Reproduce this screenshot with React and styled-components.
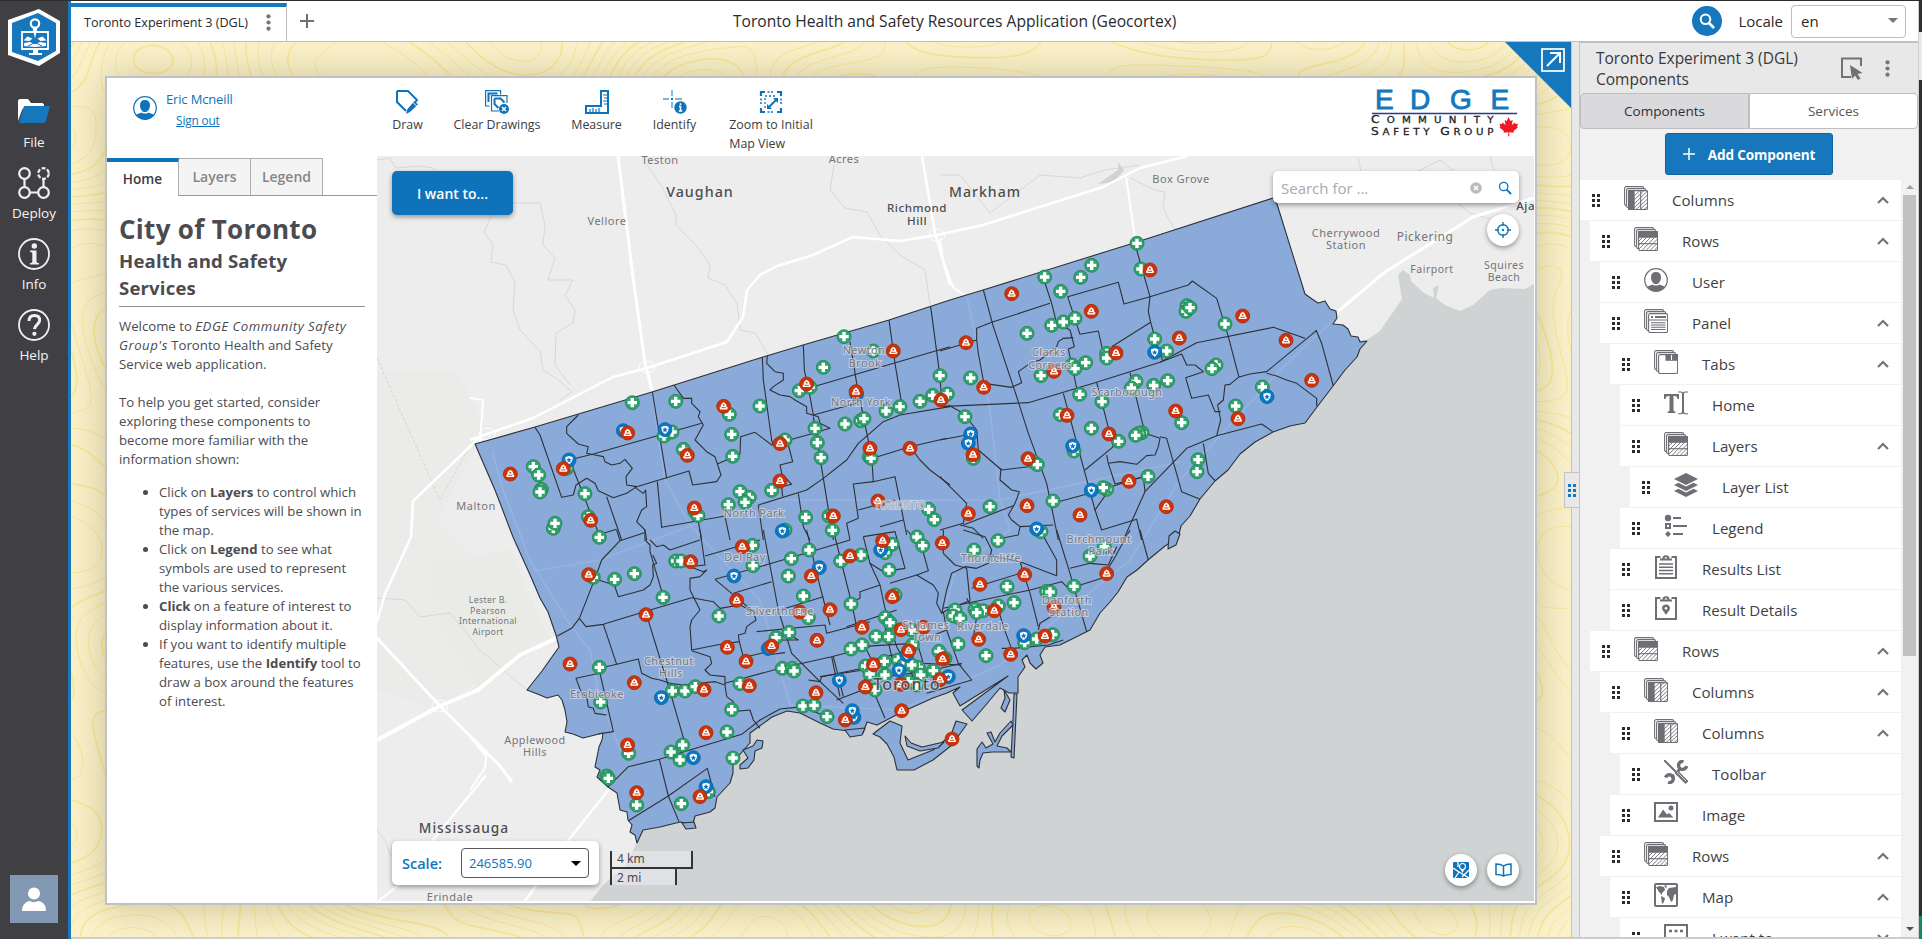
import React from "react";
import styled, { createGlobalStyle, css } from "styled-components";

const BLUE = "#1777bc";
const MAPBLUE = "#0f73bb";
const ICON = "#6e6e74";

const Global = createGlobalStyle`
  * { box-sizing: border-box; }
  body { margin: 0; overflow: hidden; font-family: "Open Sans", "Noto Sans", sans-serif; color: #333; }
  svg { display: block; flex: none; }
`;

/* ---------- application frame ---------- */
const Shell = styled.div`
  width: 1922px; height: 939px; display: flex;
  border-top: 1px solid #2b2a2d; background: #fff;
`;
const Column = styled.div`display: flex; flex-direction: column; width: 1847px;`;
const Edge = styled.div`
  width: 4px; border-left: 1px solid #cfcfd2; background: linear-gradient(#2f2f31 0 31px, #e9e9e9 31px 79px, #2f2f31 79px 915px, #148a63 915px);
`;

const Nav = styled.nav`
  width: 71px; background: #403f44; border-right: 3px solid ${BLUE};
  display: flex; flex-direction: column; align-items: center; padding: 8px 0 16px;
`;
const NavItem = styled.div`
  height: 71px; display: flex; flex-direction: column; align-items: center;
  color: #f4f4f4; font-size: 13.5px; line-height: 20px;
  svg { margin-bottom: 4px; }
`;
const NavItems = styled.div`margin-top: 29px; flex: 1;`;
const Profile = styled.div`
  width: 48px; height: 48px; background: #8199b2; display: grid; place-items: center;
`;

const TopBar = styled.header`
  height: 41px; display: flex; align-items: stretch; border-bottom: 1px solid #bdbdc2; background: #fff;
`;
const DocTab = styled.div`
  width: 216px; margin-top: 2px; border-top: 4px solid ${BLUE}; border-right: 1px solid #bdbdc2;
  display: flex; align-items: center; justify-content: space-between; padding: 0 15px 3px 13px;
  font-size: 12.6px; color: #29292c; white-space: nowrap;
`;
const AddTab = styled.div`width: 40px; display: grid; place-items: center; padding-bottom: 1px;`;
const AppTitle = styled.div`
  flex: 1; text-align: center; font-size: 15.6px; line-height: 40px; color: #29292c; margin-right: 110px; white-space: nowrap;
`;
const TopRight = styled.div`
  display: flex; align-items: center; font-size: 15px; color: #29292c; padding-right: 12px;
`;
const SearchDot = styled.div`
  width: 30px; height: 30px; border-radius: 50%; background: ${BLUE}; display: grid; place-items: center; margin-right: 16px;
`;
const LocaleBox = styled.div`
  width: 115px; height: 33px; margin-left: 8px; border: 1px solid #bdbdc2; border-radius: 4px;
  display: flex; align-items: center; justify-content: space-between; padding: 0 7px 1px 9px;
`;
const Main = styled.div`display: flex; height: 895px;`;
const BottomLine = styled.div`height: 2px; background: #cdcdd0;`;

/* ---------- stage ---------- */
const Stage = styled.div`
  position: relative; width: 1500px; background: #fbf2cb; overflow: hidden; padding: 34px 34px 32px;
`;
const Backdrop = styled.div`position: absolute; inset: 0;`;
const Corner = styled.div`
  position: absolute; right: 0; top: 0; width: 66px; height: 66px; background: ${BLUE};
  clip-path: polygon(0 0, 100% 0, 100% 100%); padding: 6px 6px 0 36px;
`;
const Preview = styled.div`
  position: relative; width: 1432px; height: 829px; border: 2px solid #bfc0c8; background: #fff;
  box-shadow: 0 2px 38px rgba(90, 80, 20, .3); display: flex; flex-direction: column;
`;
const PreviewHead = styled.div`display: flex; height: 78px; color: #3c3c40;`;
const UserBlock = styled.div`
  width: 254px; padding: 11px 0 0 26px; display: flex; gap: 9px; color: ${MAPBLUE}; font-size: 13px; line-height: 21px;
  > svg { margin-top: 7px; }
`;
const UserText = styled.div`display: flex; flex-direction: column; align-items: center; letter-spacing: -.15px;`;
const SignOut = styled.span`font-size: 11.800px; margin-left: -3px; text-decoration: underline; line-height: 20px;`;
const Tools = styled.div`display: flex; flex: 1; padding: 12px 0 0 16px; `;
const Tool = styled.div`
  margin: 0 16px; display: flex; flex-direction: column; align-items: center;
  width: ${p => p.$w}px; font-size: 12.4px; line-height: 19px; white-space: nowrap;
  svg { margin-bottom: 1px; }
`;
const Brand = styled.div`padding: 4px 15px 0 0;`;
const PreviewBody = styled.div`display: flex; flex: 1;`;
const Side = styled.aside`width: 270px; color: #4b4b50;`;
const TabRow = styled.div`
  display: flex; margin-top: 2px; height: 38px; border-bottom: 1px solid #98989d;
`;
const SideTab = styled.div`
  width: 72px; text-align: center; font-weight: 600; font-size: 14px; line-height: 36px;
  border-top: 1px solid #adadb2; border-right: 1px solid #adadb2; background: #f4f4f4; color: #86868a;
  ${p => p.$active && css`
    height: 38px; border-top: 4px solid ${MAPBLUE}; background: #fff; color: #3b3b40; line-height: 33px; font-size: 13.6px;
  `}
`;
const Article = styled.div`
  padding: 15px 12px 0 12px; font-size: 13.2px; line-height: 19px; white-space: nowrap;
  h1 { font-size: 26px; line-height: 36px; margin: 0; font-weight: 700; letter-spacing: .3px; }
  h2 { font-size: 18.6px; line-height: 27px; margin: 0; font-weight: 700; letter-spacing: .15px; }
  hr { border: 0; border-top: 1px solid #8f8f94; margin: 5px 0 10px; }
  p { margin: 0 0 19px; }
  i { letter-spacing: .5px; }
  ul { margin: -5px 0 0; padding-left: 40px; }
`;
const MapArea = styled.div`position: relative; width: 1157px; height: 745px; overflow: hidden; background: #ededed;`;
const Floating = styled.div`
  position: absolute; left: ${p => p.$x}px; top: ${p => p.$y}px; background: #fff; border-radius: 5px;
  box-shadow: 0 2px 5px rgba(0,0,0,.38); display: flex; align-items: center;
`;
const WantTo = styled(Floating)`
  width: 121px; height: 44px; background: ${MAPBLUE}; color: #fff; justify-content: center; font-weight: 600; font-size: 14px;
`;
const SearchBox = styled(Floating)`
  width: 246px; height: 32px; padding: 1px 7px 0 8px; font-size: 15px; color: #a9a9ad; gap: 16px;
  span { flex: 1; }
`;
const RoundButton = styled(Floating)`width: 32px; height: 32px; border-radius: 50%; justify-content: center;`;
const ScaleBox = styled(Floating)`
  width: 207px; height: 44px; padding: 0 10px; justify-content: space-between; color: ${MAPBLUE}; font-size: 14.5px;
  b { font-weight: 600; }
`;
const ScaleInput = styled.div`
  width: 128px; height: 30px; border: 1px solid #57575c; border-radius: 4px; display: flex; align-items: center;
  justify-content: space-between; padding: 0 7px; font-size: 13px;
`;
const ScaleBar = styled.div`position: absolute; left: 233px; top: 695px; font-size: 12px; color: #48484c; font-family: "Noto Sans", sans-serif;`;
const ScaleSeg = styled.div`
  width: ${p => p.$w}px; height: ${p => (p.$last ? 16 : 18)}px; line-height: 16px; padding-left: 5px; background: rgba(235,235,238,.6);
  border: 2px solid #333; border-top: 0; ${p => p.$last && "border-bottom: 0; line-height: 18px;"}
`;

/* ---------- splitter and component panel ---------- */
const Splitter = styled.div`
  position: relative; width: 9px; background: #e8e8e9; border-left: 1px solid #c2c2c7; border-right: 1px solid #c2c2c7;
`;
const Grip = styled.div`
  position: absolute; left: -8px; top: 430px; width: 15px; height: 36px; background: #e8e8e9;
  border: 1px solid #c2c2c7; border-right: 0; display: grid; place-items: center;
`;
const Panel = styled.aside`width: 338px; display: flex; flex-direction: column; background: #f1f1f1; border-top: 1px solid #c2c2c7;`;
const PanelHead = styled.div`
  height: 50px; background: #e8e8e8; display: flex; align-items: center; padding: 1px 28px 0 16px;
  font-size: 15.5px; line-height: 21px; color: #38383c; white-space: nowrap;
  div { flex: 1; } svg + svg { margin-left: 22px; }
`;
const Switch = styled.div`display: flex; height: 36px;`;
const SwitchTab = styled.div`
  flex: 1; text-align: center; line-height: 34px; font-size: 13.5px; color: #55555a; background: #fff;
  border: 1px solid #bdbdc2; border-radius: 0 4px 4px 0;
  ${p => p.$active && css`flex: 0 0 169px; background: #dadadd; color: #2f2f33; border-radius: 4px 0 0 4px;`}
`;
const AddWrap = styled.div`height: 51px; padding: 4px 0 0 85px;`;
const AddButton = styled.div`
  width: 168px; height: 42px; border-radius: 3px; background: ${BLUE}; border: 1px solid #11659f; color: #fff;
  font-weight: 700; font-size: 13.6px; letter-spacing: -.15px; display: flex; align-items: center; justify-content: center; gap: 13px;
`;
const TreeArea = styled.div`display: flex; height: 757px; overflow: hidden;`;
const Tree = styled.div`width: 321px;`;
const TreeRow = styled.div`
  height: 40px; margin: 0 0 1px ${p => p.$depth * 10}px; background: #fff; display: flex; align-items: center;
  padding: 0 11px 0 12px; color: #3f3f43; font-size: 15.100px;
  span { flex: 1; margin-left: 24px; }
  > svg:nth-child(2) { margin: 0 0 4px 24px; }
`;
const Scroll = styled.div`
  width: 17px; display: flex; flex-direction: column; align-items: center; justify-content: space-between; padding: 5px 0 6px; background: #f1f1f1;
`;
const Thumb = styled.div`width: 13px; height: 461px; background: #c1c1c1; margin: 6px 0 auto;`;

/* ---------- small drawings ---------- */
const Dots = ({ c = "#75757a" }) => (
  <svg width="5" height="17" fill={c}><circle cx="2.5" cy="2.3" r="2.1" /><circle cx="2.5" cy="8.5" r="2.1" /><circle cx="2.5" cy="14.7" r="2.1" /></svg>
);
const Handle = ({ c = "#2b2b2f" }) => (
  <svg width="8" height="13" fill={c}>
    {[0, 5, 10].map(y => [0, 5].map(x => <rect key={x + "," + y} x={x} y={y} width="3" height="3" />))}
  </svg>
);
const Chevron = ({ down }) => (
  <svg width="14" height="10" fill="none" stroke="#74747a" strokeWidth="2.2"><path d={down ? "M2 2l5 5 5-5" : "M2 8l5-5 5 5"} /></svg>
);
const Magnifier = ({ s, c, w = 2 }) => (
  <svg width={s} height={s} viewBox="0 0 16 16" fill="none" stroke={c} strokeWidth={w}><circle cx="6.5" cy="6.3" r="4.8" /><path d="M10 10l5 5" strokeWidth={w + 0.6} /></svg>
);
const Caret = ({ c, w = 10 }) => <svg width={w} height={w / 2} viewBox="0 0 10 5" fill={c}><path d="M0 0h10L5 5z" /></svg>;
const Person = ({ c, s = 24 }) => (
  <svg width={s} height={s} viewBox="0 0 24 24"><circle cx="12" cy="12" r="11.3" fill="#fff" stroke={c} strokeWidth="1.2" />
    <path d="M12 4c3.4 0 5 2 5 5.2 0 3.2-1.800 6.800-5 6.800s-5-3.600-5-6.800C7 6 8.600 4 12 4zM3.200 18.500c2-.9 4-1.300 5.200-2 1 1.400 6.200 1.400 7.200 0 1.200.7 3.200 1.100 5.200 2C18.500 22 15.500 23.300 12 23.300S5.500 22 3.200 18.500z" fill={c} /></svg>
);

const Logo = () => (
  <svg width="54" height="58" viewBox="0 0 54 58">
    <path d="M32 0L53 12v32L32 57 1 46V11z" fill="#fff" /><path d="M31 4l18 10v28L31 52 5 43V14z" fill={BLUE} />
    <path d="M15 23h26v17H15z" fill="none" stroke="#fff" strokeWidth="1.800" />
    <path d="M16.500 31.500l4-4 5 2-3 2.500zM39.500 31.500l-4-4-5 2 3 2.500zM17 34l6-1 5 2.300 5-2.300 6 1v3l-11 1-11-1z" fill="#fff" />
    <path d="M21 37l7-3.500 7 3.500" fill="none" stroke={BLUE} strokeWidth="1" />
    <circle cx="28" cy="14.500" r="4.200" fill={BLUE} stroke="#fff" strokeWidth="2.200" /><path d="M25.500 18.500l2.500 11 2.500-11z" fill="#fff" />
    <path d="M26 41h5v3h4v2H22v-2h4z" fill="#fff" />
  </svg>
);
const navIcons = {
  File: <svg width="32" height="32" viewBox="0 0 32 32"><path d="M0 5c0-1 1-2 2-2h8l3 4h11c1 0 2 1 2 2v3H7c-2 0-2.500 1-3 2L0 25z" fill="#fff" /><path d="M6 10h26l-4 15c-.4 1.300-1 2-2.500 2H1z" fill={BLUE} /></svg>,
  Deploy: <svg width="32" height="32" viewBox="0 0 32 32" fill="none" stroke="#f0f0f0" strokeWidth="2.200"><circle cx="6.500" cy="6.500" r="5.300" /><circle cx="6.500" cy="25.500" r="5.300" /><circle cx="25.500" cy="25.500" r="5.300" /><circle cx="25.500" cy="6.500" r="5.300" strokeDasharray="4 1.600" /><path d="M6.500 12v8M12 25.500h8M25.500 12v8" /></svg>,
  Info: <svg width="32" height="32" viewBox="0 0 32 32"><circle cx="16" cy="16" r="15" fill="none" stroke="#f0f0f0" strokeWidth="1.800" /><circle cx="16.300" cy="8" r="2.700" fill="#f0f0f0" /><path d="M12 12.500h6.500v11c0 1 1 1.500 2.500 1.500v1.500h-9V25c1.500 0 2.300-.5 2.300-1.500v-8c0-1-.8-1.500-2.300-1.500z" fill="#f0f0f0" /></svg>,
  Help: <svg width="32" height="32" viewBox="0 0 32 32"><circle cx="16" cy="16" r="15" fill="none" stroke="#f0f0f0" strokeWidth="1.800" /><path d="M11 12c0-3.500 2-5.500 5.500-5.500 3.200 0 5.200 1.800 5.200 4.600 0 4-4.700 4.400-5.200 9" fill="none" stroke="#f0f0f0" strokeWidth="3" /><circle cx="16.400" cy="24.800" r="2.100" fill="#f0f0f0" /></svg>,
};

const toolIcons = {
  draw: <><path d="M1 1h11l9 9-2 2.500M1 1v11l9 9" fill="none" stroke={MAPBLUE} strokeWidth="2" /><path d="M18.500 11l3.500 3.500-8 7.500-4 2 1.500-5z" fill={MAPBLUE} /><path d="M17 12.500l4 4" stroke="#fff" /></>,
  clear: <g fill="none" stroke={MAPBLUE}><path d="M4.500 16H.6V.6h15v4" strokeWidth="1.200" /><path d="M3.500 12V3.500h9" strokeWidth="2" /><path d="M14 21H6.500V5.600H22V13" strokeWidth="1.200" /><path d="M9.500 8.500h6l4 4M9.500 8.500V14l4 4" strokeWidth="2" /><circle cx="19" cy="19" r="5" fill={MAPBLUE} stroke="none" /><path d="M17 17l4 4M21 17l-4 4" stroke="#fff" strokeWidth="1.500" /></g>,
  measure: <g fill="none" stroke={MAPBLUE} strokeWidth="2"><path d="M23 1v22H1v-7h15V1z" /><path d="M22 5h-4M22 8h-3M22 11h-4M22 14h-3M5 22v-3M8 22v-4M11 22v-3M14 22v-4" strokeWidth="1.200" /></g>,
  identify: <><path d="M9 0v6M0 9h6M12 9h7M9 12v6" stroke="#7fb3dc" strokeWidth="1.800" /><rect x="8" y="8" width="2" height="2" fill={MAPBLUE} /><circle cx="17.500" cy="17.500" r="6.200" fill={MAPBLUE} /><path d="M17.500 13.200v1.800M17.500 16v5M16 16.500h2M15.800 21h3.500" stroke="#fff" strokeWidth="1.600" /></>,
  zoom: <g fill="none" stroke={MAPBLUE} strokeWidth="1.800"><path d="M2 6V2h4M18 2h4v4M22 18v4h-4M6 22H2v-4" strokeWidth="2.200" /><path d="M8.500 2h7M8.500 22h7M2 8.500v7M22 8.500v7" strokeDasharray="2 1.500" strokeWidth="1.500" /><path d="M6 18V6h12" strokeDasharray="2 2" strokeWidth="1.300" /><path d="M9.500 17.500l8-8" strokeWidth="2" /><path d="M14 8h5v5zM8 14v5h5z" fill={MAPBLUE} stroke="none" /></g>,
};

const Stack = ({ children }) => (
  <g fill="#fff" stroke={ICON} strokeWidth="1.100"><rect x=".6" y=".6" width="19" height="19" rx="1.500" /><rect x="2.600" y="2.600" width="19" height="19" rx="1.500" /><rect x="4.600" y="4.600" width="19" height="19" rx="1.500" />{children}</g>
);
const clip = <g fill="none" stroke={ICON} strokeWidth="2"><path d="M6.500 2H2v21h20V2h-4.500" /><path d="M6 4.500h12M9.500 3.500c0-3 5-3 5 0" /></g>;
const rowIcons = {
  columns: <Stack><path d="M4.600 4.600h5.500v19H4.600z" fill={ICON} /><g strokeWidth=".9"><path d="M10 10l6-5.500M10 14L20 4.600M10 18L23.500 5M10 22L23.500 9M12 23.500L23.500 13M16 23.500l7.500-7M20 23.500l3.500-3" /></g><path d="M16.700 5v18.500" /></Stack>,
  rows: <Stack><path d="M4.600 4.600h19v5.500h-19z" fill={ICON} /><g strokeWidth=".9"><path d="M5 14l4-4M5 18l8-8M5 22l12-12M8 23.500L21 10M12 23.500L23.500 12M16 23.500l7.500-7.500M20 23.500l3.500-3.500" /></g><path d="M5 16.700h18.500" /></Stack>,
  panel: <Stack><path d="M7 8h2M11 8h11" strokeWidth="2" /><path d="M5 11h18M7 13.800h14.500M7 16h14.500M7 18.200h14.500M7 20.500h14.500" /></Stack>,
  tabs: <Stack><path d="M12 4.600h11.500v5.500H12z" fill={ICON} /><path d="M17.500 5v5" stroke="#fff" /></Stack>,
  text: <g fill={ICON}><path d="M0 3h15v5h-1.500c-.3-2-1-3-3-3H9.500v14c0 1.300.7 1.600 2 1.700V22h-8v-1.300c1.300-.1 2-.4 2-1.700V5H4.500c-2 0-2.700 1-3 3H0z" /><path d="M14 .6h3.500l1.500 1 1.500-1H24v1h-3l-1 1V21l1 1.300h3v1h-3.500L19 22.500l-1.500.8H14v-1h3L18 21V2.600l-1-1h-3z" /></g>,
  layers: <g fill={ICON}><path d="M12 0l12 6-12 6L0 6z" /><path d="M4.500 9.700L12 13.500l7.500-3.800L24 12l-12 6L0 12z" /><path d="M4.500 15.700L12 19.500l7.500-3.800L24 18l-12 6L0 18z" /></g>,
  legend: <g fill={ICON}><circle cx="4" cy="4" r="3.200" /><path d="M9 3h8v2H9zM9 11h14v2H9zM9 19h10v2H9zM4 17l3 3-3 3-3-3z" /><rect x="2" y="10" width="4" height="4" fill="none" stroke={ICON} strokeWidth="2" /></g>,
  results: <>{clip}<path d="M5 9h14M5 12.200h14M5 15.500h14M5 18.700h14" stroke={ICON} strokeWidth="1.500" /></>,
  details: <>{clip}<path d="M12 8.500c2.400 0 4 1.500 4 3.800 0 2-2.500 4-4 6.700-1.500-2.700-4-4.700-4-6.700 0-2.300 1.600-3.800 4-3.800z" fill={ICON} /><circle cx="12" cy="12.300" r="1.300" fill="#fff" /></>,
  tools: <g fill="none" stroke={ICON}><path d="M0 0l13 13" strokeWidth="2" /><path d="M12 11.500l11 11" strokeWidth="4" /><path d="M13 12l9 9" stroke="#fff" strokeWidth=".8" /><path d="M7 17.500l3-2.500M14 11l3-3" strokeWidth="3" /><path d="M19.500 1.500a4 4 0 1 0 3 4.500M4 22.500a4 4 0 1 0-2.500-5" strokeWidth="3.400" /></g>,
  image: <g transform="translate(0 -1)"><rect x="1" y="3" width="22" height="18" fill="none" stroke={ICON} strokeWidth="2" /><path d="M4 17.500l5-8 4 5 2-1.500 4.500 4.500z" fill={ICON} /><circle cx="17" cy="8" r="2.500" fill={ICON} /></g>,
  map: <><rect x="1" y="1" width="22" height="22" rx="1" fill="none" stroke={ICON} strokeWidth="2" /><path d="M2 4l4-1 4 1 1 3-3 3 0 2-3-3zM10 2.500h3l-1 3zM7 13l4 2-1 4-2 2zM13 8l2-3 7-1v7l-2 1-1 5-2 2-2-5-2-2z" fill={ICON} /></>,
  want: <><rect x="1" y="1" width="22" height="16" fill="none" stroke={ICON} strokeWidth="2" /><path d="M5 7h3M10.500 7h3M16 7h3" stroke={ICON} strokeWidth="2.600" /></>,
};

const rows = [
  ["columns", "Columns", 0, 1], ["rows", "Rows", 1, 1], ["user", "User", 2], ["panel", "Panel", 2, 1], ["tabs", "Tabs", 3, 1],
  ["text", "Home", 4], ["rows", "Layers", 4, 1], ["layers", "Layer List", 5], ["legend", "Legend", 4], ["results", "Results List", 3],
  ["details", "Result Details", 3], ["rows", "Rows", 1, 1], ["columns", "Columns", 2, 1], ["columns", "Columns", 3, 1],
  ["tools", "Toolbar", 4], ["image", "Image", 3], ["rows", "Rows", 2, 1], ["map", "Map", 3, 1], ["want", "I want to", 4, 2],
];

/* ---------- contour lines behind the preview ---------- */
function contours(w, h, step) {
  const f = (x, y) =>
    Math.sin(x / 83 + 1.3 * Math.sin(y / 97)) + Math.sin(y / 71 + 1.1 * Math.sin(x / 121 + 1)) +
    0.5 * Math.sin((x + y) / 47) + 0.35 * Math.sin((x - 1.6 * y) / 39);
  let thin = "", thick = "";
  for (let y = 0; y < h; y += step) for (let x = 0; x < w; x += step) {
    if (x > 50 && x < w - 50 && y > 50 && y < h - 50) continue;
    const c = [[x, y], [x + step, y], [x + step, y + step], [x, y + step]];
    const v = c.map(p => f(p[0], p[1]));
    for (let k = -10; k <= 10; k++) {
      const L = k * 0.28 + 0.05;
      const pts = [];
      for (let i = 0; i < 4; i++) {
        const j = (i + 1) % 4;
        if ((v[i] < L) !== (v[j] < L)) {
          const t = (L - v[i]) / (v[j] - v[i]);
          pts.push((c[i][0] + t * (c[j][0] - c[i][0])).toFixed(1) + " " + (c[i][1] + t * (c[j][1] - c[i][1])).toFixed(1));
        }
      }
      if (pts.length >= 2) { const s = `M${pts[0]}L${pts[1]}`; if (k % 3 === 0) thick += s; else thin += s; }
    }
  }
  return { thin, thick };
}
const topo = contours(1500, 895, 6);

/* ---------- map data; each sheet has its own origin, three units to a pixel ---------- */
const sheets = [
  {
    x: 470, y: 150,
    lines: ["195,832 210,855 275,1042 310,1035 318,1005 350,985 375,1000 385,1022 430,1043 470,1030 500,1010 470,1005 468,980 487,955 465,928 450,940 425,945 405,935 400,920 375,915 350,910 355,890 325,882 290,850 290,830 325,795", "297,930 370,912 570,855 695,820", "547,726 590,985", "612,705 640,745 665,745 665,760 690,785 685,800 700,825 675,870 710,905 735,920 753,975 740,995 668,1005 657,963 495,1012 520,1030 527,1020 530,1070 515,1080 500,1115 525,1140 530,1170", "562,995 575,1132 765,1098", "865,1065 1010,1020 1060,985 1130,930 1165,880 1240,815 1290,795 1440,770", "742,942 810,912 812,860 855,847 905,885 1030,850 1080,835 1050,820 1045,800 1010,790 1010,770 975,750 960,740 930,735 900,720 910,710 940,690 940,670 915,665 890,640 892,618", "877,622 880,690 905,870 910,885", "955,885 968,935 930,945 935,970 965,1003 935,1010 938,1040", "1000,585 1003,660 1020,740 1030,795 1160,760", "1015,715 1440,590", "1140,575 1160,700 1180,800 1205,920 1210,995 1275,980 1310,1155", "1257,510 1275,640 1295,760", "1382,470 1410,680 1415,750", "1030,800 1060,985 1090,1170", "1203,926 1320,890 1430,865", "1210,995 1150,1002 1165,1105 1130,1120 1140,1170", "305,945 350,1060 390,1160", "410,1040 455,1170", "985,1030 1000,1130 1020,1170", "865,1065 880,1170", "765,1100 780,1170", "685,1115 695,1170", "400,1150 440,1138", "1320,890 1350,930 1380,960 1440,1005", "1165,1080 1275,1050", "1230,1130 1300,1110"],
    c: "1122,560 1210,603 1060,652 1410,677 487,758 617,754 870,768 778,793 988,722 1020,712 1290,770 1350,754 1388,736 1248,783 1172,812 1182,806 1125,822 1035,835 785,853 582,858 606,846 945,870 1042,878 1053,923 640,898 788,919 1198,920 1203,925 190,950 206,975 214,1018 210,1026 345,1031 355,1100 388,1162 250,1135 255,1120 905,1021 810,1025 838,1042 825,1057 775,1064 675,1085 684,1097 1007,1102 1077,1098 1087,1141 945,1140 1376,1078 1393,1109 290,955",
    p: "460,842 585,839 297,930 937,1143 1160,732",
    f: "1270,603 1010,702 1158,725 761,769 473,849 1413,750 652,916 930,881 1200,895 1320,895 121,972 280,956 930,993 673,1074 362,1111 1090,1098 1224,1053",
  },
  {
    x: 940, y: 150,
    lines: ["130,420 160,530 230,740 265,850 320,1000 355,1170", "0,603 110,570 115,610 132,700 215,712 245,698 235,665 270,640 300,630 350,590 355,575 370,565 400,563", "110,570 110,535 155,517 330,460", "312,390 335,460 350,520 390,540 403,590 385,597 405,690 415,740", "383,440 535,397 552,462 630,440 745,405 757,393 830,445 865,560 897,682", "383,440 420,553 475,543 490,610", "515,590 632,517 625,485 630,440 590,300", "632,517 655,600 668,632", "0,770 265,758 470,697 660,637 770,578 1000,532 1095,565", "1130,541 980,665 930,672 895,682 870,703 855,705 850,750 833,765 842,810 830,857", "980,670 1010,678 1040,690 1070,700 1130,745 1130,768", "1128,540 1145,580 1180,708", "660,637 725,612 740,645 765,645 790,665 737,683 755,745 805,735 825,785 842,785", "570,668 615,850 660,865 655,890 645,915 620,917 590,943 540,935 505,940 500,915", "660,860 680,865 725,1025 780,1048", "470,697 520,890 435,960", "370,730 465,1080 485,1140 590,1108 605,1170", "505,940 525,1002 610,980 615,1025", "355,1055 450,1030 610,980", "830,857 965,822 998,845", "830,857 740,895 615,1025 550,1170", "790,880 805,970 825,992", "465,1080 500,1030", "25,765 70,790 110,840 115,900 150,930 185,960 285,948", "183,955 180,990 215,1020 238,1025 225,1060 205,1095 215,1110 240,1130 235,1155 170,1168", "0,980 80,1060 70,1120 0,1140", "70,1125 220,1067", "60,1125 100,1135 130,1165", "240,1130 340,1125", "0,870 80,855"],
    c: "591,280 603,357 314,381 455,346 422,382 362,424 741,467 738,484 750,473 855,522 335,526 370,516 405,505 261,550 644,567 680,603 500,610 500,624 396,645 405,656 437,638 303,677 92,684 22,732 828,645 816,656 588,694 574,714 641,706 683,692 967,711 419,733 486,755 361,794 887,768 725,818 75,800 454,835 606,848 596,850 587,856 536,874 402,903 100,925 280,935 292,944 774,929 771,965 624,979 500,1018 490,1013 339,1053 150,1070 303,1145",
    p: "644,607 981,740 92,852 85,880 398,888 454,1021 290,1137",
    f: "630,360 215,431 454,484 908,498 718,564 78,578 1038,571 528,609 342,664 131,712 1115,691 707,783 381,796 894,806 507,852 99,914 264,926 567,994 261,1067 420,1095 679,1070 85,1091",
  },
  {
    x: 470, y: 530,
    lines: ["523,8 450,32 395,90 375,145 328,265 305,295 262,318", "328,265 348,290 400,283 540,240 665,203", "548,75 560,100 548,105 550,140 540,165 520,180 445,200 433,165 385,150", "525,0 525,30 540,45 540,65 580,200", "400,283 440,403", "388,415 440,403 505,387 515,430 545,445 570,450 600,460", "535,272 590,450 645,640", "388,430 318,445 335,490 350,500 355,530 370,535 375,550 410,555", "390,430 430,605 385,612", "415,770 475,710 568,688 815,613 870,570 930,537 1000,530 1090,570", "568,688 595,798 627,875", "475,872 595,798 712,715 735,800", "600,460 640,465 735,455 765,465 770,500 790,515 785,545 840,540 850,570 870,595", "440,0 450,32", "540,30 560,50 580,45 600,60 690,30", "690,0 705,105 660,110 700,125 710,120 690,140 660,145 660,180 690,240 665,270 660,290 665,360 740,345 808,335 805,315 825,310 830,290 858,270 850,245 735,148", "705,78 870,30", "660,110 620,90", "665,203 730,215 750,235 810,225 860,250", "790,190 905,155", "880,0 925,240 965,370 1050,455 1120,520", "735,148 905,100 1140,30", "808,335 825,400", "830,380 880,368 890,375 945,368", "665,362 720,380 725,400 705,420 720,435 765,440 765,465", "765,460 930,415 1085,380 1200,350", "930,240 1060,200", "860,305 1065,285 1070,310 1200,275", "1010,0 1040,130 1080,285", "1090,0 1145,220 1160,290", "1085,380 1110,500", "1015,450 1050,455 1055,440 1200,410", "945,305 985,330 930,330"],
    c: "434,148 493,131 370,142 388,412 392,516 476,670 410,738 415,745 500,825 771,606 638,645 603,666 630,690 789,684 634,821 715,785",
    p: "670,683 708,770",
    f: "356,134 300,402 493,458 473,645 500,788 708,608 690,800",
  },
  {
    x: 800, y: 530,
    lines: ["190,20 285,5 315,115 250,125 210,100 190,20", "210,100 240,165 255,235 290,350 340,440", "155,215 180,205 180,185 240,165", "270,160 350,135 385,122 365,50 320,0", "350,135 400,165 415,190 410,220 425,250 450,235 510,212 500,115 465,105 450,90 430,70 430,0", "425,250 440,180 455,130 495,110 530,115 565,100 575,60 555,20 490,0", "430,235 690,180 785,155 800,170 810,175 905,145 940,90 990,0", "515,175 660,130", "560,75 660,95 770,137 770,90 720,0", "660,95 690,190 715,290", "500,205 530,260 520,325", "590,220 610,290 640,370", "770,0 810,130 860,305", "605,355 640,355 745,345 790,330", "715,300 720,280 760,255", "430,245 440,300 475,400 515,450 380,490", "340,300 370,400 485,405", "110,510 240,460", "215,470 255,565", "180,350 340,340 440,300", "1020,0 1045,90", "810,115 870,100 925,105 950,50", "100,380 130,500", "60,440 190,420 215,470", "140,290 290,240", "255,290 275,380 330,390 370,400", "200,360 215,390 300,370", "190,450 400,420 485,400"],
    c: "740,184 750,186 822,169 870,78 913,50 758,314",
    p: "",
    f: "735,318 762,231 920,131 456,627",
  },
  {
    x: 640, y: 490,
    lines: [],
    c: "337,166 107,213 123,213 339,227 507,180 454,206 602,213 663,195 757,163 735,188 747,240 445,258 69,322 490,318 237,378 633,342 505,383 447,427 408,443 736,383 750,398 708,440 746,440 666,465 633,477 427,535 457,535 462,543 300,581 97,603 135,603 166,590 275,659 489,648 522,646 561,680 831,141 848,167 815,420 817,465 733,514 677,528 690,552 735,555 705,600 765,315 775,510 790,525 835,532 815,525 842,555 880,542 897,484 915,505 954,462 945,360 940,378 960,385 1005,358 1030,362 1010,368 1075,348 1122,338 1101,290 1074,152 1002,180 1038,497 1154,458 1190,447 830,585 805,575",
    p: "722,180 538,233 282,258 385,475 800,495 777,541 925,560 598,571 64,623 642,682 637,662 1151,437",
    f: "307,170 152,215 514,258 630,198 728,152 290,331 18,374 479,366 570,359 757,320 666,412 783,419 850,412 531,451 262,472 395,468 318,514 328,587 192,599 528,608 700,524 676,591 782,583 806,482 908,507 900,569 616,690 785,662 907,159 1020,283 1154,254 1063,362 1016,448 1112,493",
  },
];
const city = "475,444 535,427 652,392 763,357 803,345 889,320 950,300 983,290 1137,242 1273,198 1277,204 1305,294 1312,299 1318,303 1325,301 1330,309 1336,311 1337,318 1333,324 1343,325 1348,329 1351,336 1358,337 1360,342 1367,341 1360,349 1357,357 1345,370 1333,386 1317,407 1305,423 1290,426 1273,432 1255,442 1240,454 1228,470 1215,481 1200,499 1190,516 1181,526 1178,538 1165,546 1148,560 1137,570 1127,577 1118,592 1110,602 1100,613 1090,630 1072,639 1060,645 1045,647 1040,655 1043,663 1036,669 1030,663 1027,655 1022,660 1025,667 1018,677 1018,693 1009,693 1000,688 985,706 972,721 962,710 1008,676 960,706 953,693 960,687 947,693 933,698 902,712 877,725 867,722 863,733 833,729 820,723 800,713 787,711 772,717 757,728 750,733 750,743 742,752 733,763 733,773 730,783 717,797 715,808 710,812 695,816 693,824 680,822 660,827 643,830 637,843 635,835 630,832 632,825 628,820 627,812 620,810 617,793 608,787 597,777 600,770 595,767 597,757 599,747 602,740 603,733 583,738 573,734 565,732 567,722 565,710 562,700 558,695 547,698 540,695 527,690 542,671 559,647 556,635 548,612 540,598 531,577 513,537 495,490";
const islets = [
  "873,734 890,721 902,726 900,743 908,760 933,750 951,735 956,721 967,724 952,745 933,760 914,770 897,770 894,757 887,744 880,737",
  "1014,694 1017,694 1014,758 1011,757 1013,720", "979,768 977,766 977,749 982,742 986,748 993,744 987,733 991,732 995,742 1000,733 1011,721 1013,725 1002,736 997,746 1007,748 1011,752 992,752 983,753 980,760",
  "905,736 911,743 922,747 935,744 944,742 938,748 920,751 907,746",
  "743,750 753,746 757,740 763,741 762,748 755,751 754,760 748,768 740,769 740,765 748,758", "1169,536 1175,531 1180,534 1176,545 1168,549", "845,730 865,728 862,735 850,737",
  "682,823 694,822 696,828 686,829", "1004,690 1010,700 1005,712 1001,708 1005,698",
];
const roads = [
  ["618,156 633,277 645,363 652,390", 3], ["470,440 490,433 533,418 613,377 647,368 727,342 743,317 747,290 760,275 777,266 813,255 853,237 900,241 937,235 983,225 1103,187 1140,168 1187,156", 2.500],
  ["922,156 935,233 950,285", 2.500], ["940,238 943,260 953,287 967,297", 2], ["1126,177 1135,238", 2], ["1336,313 1385,272 1473,217 1534,198", 3],
  ["480,437 413,501 411,537 385,594 377,622", 2.500], ["377,638 440,706 500,766 512,782", 3], ["377,740 440,706 478,690 520,655 559,637", 4], ["486,775 433,840 415,862", 2.500], ["610,788 567,842 525,901", 2.500], ["470,737 486,756 485,768 470,790", 2], ["377,902 400,884", 2], ["480,445 483,400 470,398", 2],
];
const creeks = ["647,165 662,187 676,215 676,225 700,250 710,265 708,278 725,285 737,303 740,330 755,333 768,355", "377,160 390,158 396,168 420,166 433,168 440,175 460,180 475,202 494,210 484,232 493,245 491,262 506,265 515,282 513,310 520,330 540,351 543,370 556,378 572,392 560,400", "502,203 540,203 545,225 543,245 555,258 548,280 573,280 565,295 575,310 573,323 556,333 555,365 570,385", "834,165 830,190 845,208 867,212 880,235 900,255 925,270 930,305", "940,175 960,175 990,213 1020,190 1040,175 1080,178 1105,170 1140,165", "1130,178 1155,190 1165,192 1163,208 1172,225 1180,235", "1375,200 1385,188 1440,160 1465,180 1455,201 1470,213 1500,222", "377,598 405,600 420,617 450,613 480,650 515,680 527,690", "377,830 385,840 390,855 420,860 430,868", "1490,156 1494,170", "1358,158 1362,175"];
const labels = [
  [660, 160, "Teston", 11], [844, 159, "Acres", 11], [700, 192, "Vaughan", 14.300, 1], [985, 192, "Markham", 14.100, 1], [917, 207.500, "Richmond", 11.600, 1], [917, 221, "Hill", 11.600, 1], [607, 221, "Vellore", 11], [1181, 179, "Box Grove", 11],
  [1346, 233, "Cherrywood", 11], [1346, 245, "Station", 11], [1425, 237, "Pickering", 12], [1432, 269, "Fairport", 10.500], [1504, 265, "Squires", 10.500], [1504, 277, "Beach", 10.500], [1529, 206, "Ajax", 11.600, 1], [476, 506, "Malton", 11],
  [488, 600, "Lester B.", 8.800], [488, 611, "Pearson", 8.800], [488, 621, "International", 8.800], [488, 632, "Airport", 8.800], [535, 740, "Applewood", 10.800], [535, 752, "Hills", 10.800], [464, 828, "Mississauga", 13.700, 1], [450, 897, "Erindale", 11],
  [597, 694, "Etobicoke", 10.800, 2], [669, 661, "Chestnut", 10.800, 2], [671, 673, "Hills", 10.800, 2], [780, 611, "Silverthorne", 10.800, 2], [745, 557, "Del Ray", 10.800, 2], [754, 513, "North Park", 10.800, 2], [861, 402, "North York", 10.800, 2], [864, 350, "Newton", 10.800, 2], [865, 363, "Brook", 10.800, 2],
  [1049, 352, "Clarks", 10.800, 2], [1050, 365, "Corners", 10.800, 2], [1127, 392, "Scarborough", 10.800, 2], [900, 505, "TORONTO", 10, 3], [991, 558, "Thorncliffe", 10.800, 2], [983, 626, "Riverdale", 10.800, 2], [926, 625, "St James", 10.800, 2], [927, 637, "Town", 10.800, 2], [907, 684, "Toronto", 16.200, 1],
  [1067, 600, "Danforth", 10.800, 2], [1069, 612, "Station", 10.800, 2], [1099, 539, "Birchmount", 10.800, 2], [1101, 551, "Park", 10.800, 2],
];

const Symbols = () => (
  <defs>
    <g id="c"><circle r="7" fill="#2ea36b" stroke="#23804f" strokeWidth=".8" /><path d="M-1.700-4.700h3.400v3h3v3.400h-3v3h-3.400v-3h-3v-3.400h3z" fill="#fff" /></g>
    <g id="f"><circle r="7" fill="#cc330a" stroke="#a82a06" strokeWidth=".8" /><path d="M-3 .6C-3-2.200-1.500-3.300-.8-3.400L0-4.300l.8.9C1.500-3.300 3-2.200 3 .6l1.100.6-.5 1.900H-3.600L-4.100 1.200z" fill="#fff" /><path d="M-2.200 1.300h4.400" stroke="#cc330a" strokeWidth=".9" /><circle cy="-1.300" r=".9" fill="#cc330a" /></g>
    <g id="p"><circle r="7" fill="#0b77c3" stroke="#0a66a8" strokeWidth=".8" /><path d="M-3.600-3L0-4l3.600 1c.3 3.600-.9 6-3.600 7.300C-2.700 3-3.900.6-3.600-3z" fill="#fff" /><path d="M0-2.700L.8-.9l1.900.2L1.300.6l.4 1.900L0 1.500l-1.700 1 .4-1.900-1.400-1.300 1.900-.2z" fill="#0b77c3" /></g>
  </defs>
);
const Marks = ({ kind }) => sheets.map(s => (s[kind] ? s[kind].split(" ") : []).map(m => {
  const [a, b] = m.split(",");
  return <use key={s.x + "-" + s.y + m} href={"#" + kind} x={s.x + a / 3} y={s.y + b / 3} />;
}));

const CityMap = () => (
  <svg width="1157" height="745" viewBox="377 156 1157 745">
    <Symbols />
    <rect x="377" y="156" width="1157" height="745" fill="#ededed" />
    <path d="M377 370h80l30 60-50 90 60 60 40 60-100 70-60-20z" fill="#ebebea" />
    <path d="M430 560l80-10 40 90-70 50-40-60z" fill="#eaebe7" />
    <path d="M1098 184l20-14 0-8 6 8-10 12z" fill="#cfd3d4" />
    <polygon fill="#cfd3d4" points="1534,284 1525,289 1502,288 1490,290 1473,305 1460,311 1445,305 1436,298 1439,285 1433,288 1434,298 1424,293 1411,281 1410,275 1403,270 1398,275 1402,299 1380,331 1367,340 1300,340 1000,640 750,690 640,800 637,843 625,866 603,885 590,902 1534,902" />
    <g fill="none" stroke="#d5d9d8" strokeWidth="1">{creeks.map(d => <polyline key={d} points={d} />)}</g>
    <polyline points="377,358 400,410 440,500 473,441" fill="none" stroke="#c9c9c9" strokeDasharray="3 2" opacity=".7" />
    <g fill="none" stroke="#fff" strokeLinejoin="round">{roads.map(([d, w]) => <polyline key={d} points={d} strokeWidth={w} />)}
      {[[440, 706], [647, 367], [937, 235], [487, 434]].map(([x, y]) => <ellipse key={x} cx={x} cy={y} rx="8" ry="6" strokeWidth="1" />)}</g>
    <g fill="#8aaada" stroke="#2d3136" strokeWidth="1.100" strokeLinejoin="round">
      <polygon points={city} />{islets.map(d => <polygon key={d} points={d} />)}
    </g>
    <g fill="none" stroke="#97b3e0" strokeWidth="1.600">
      <polyline points="492,450 503,490 530,560 570,625 590,650 600,700 625,760" /><polyline points="652,395 665,480 690,525 760,600 790,705 900,710 1000,665 1130,560 1180,480 1280,370 1333,320" />
      <polyline points="967,297 980,360 990,410 1000,500 1010,530 955,570 945,610" /><polyline points="534,571 600,560 680,530 760,500 1000,500 1180,462" />
    </g>
    <g fill="none" stroke="#2d3136" strokeLinejoin="round">
      {sheets.map(s => <g key={s.x + "," + s.y} transform={`translate(${s.x} ${s.y}) scale(.33333)`} strokeWidth="3.300">{s.lines.map(d => <polyline key={d} points={d} />)}</g>)}
    </g>
    <Marks kind="c" /><Marks kind="p" /><Marks kind="f" />
    <g fontFamily="'Noto Sans', sans-serif" textAnchor="middle">
      {labels.map(([x, y, t, s, k]) => (
        <text key={t + x + y} x={x} y={y + s * 0.36} fontSize={s} letterSpacing={s > 13 ? 1 : s < 9 ? .3 : .5}
          fill={k === 1 ? "#4d4d4f" : k === 2 ? "#77777b" : k === 3 ? "#b0b0b6" : "#75757a"} fontWeight={k === 1 ? 500 : 400}
          stroke={k === 2 || k === 3 || t === "Toronto" ? "rgba(225,226,232,.65)" : "none"} strokeWidth="2.200" paintOrder="stroke">{t}</text>
      ))}
    </g>
  </svg>
);

const EdgeLogo = () => (
  <svg width="150" height="56" viewBox="1370 82 150 56">
    <g fontFamily="'Liberation Sans', sans-serif" fontSize="28" fill="#1777bc" stroke="#1777bc" strokeWidth=".9">
      <text x="1375 1410 1450 1490.500" y="109">EDGE</text>
    </g>
    <path d="M1372 113.500h145" stroke="#2b3990" strokeWidth="1.400" />
    <g transform="translate(1371 0) scale(1.25 1)" fontFamily="'DejaVu Sans', sans-serif" fontSize="8.200" fill="#222" stroke="#222" strokeWidth=".25">
      <text x="0" y="123.500" textLength="98"><tspan fontSize="9.800">C</tspan>OMMUNITY</text>
      <text x="0" y="135.500" textLength="98"><tspan fontSize="9.800">S</tspan>AFETY <tspan fontSize="9.800">G</tspan>ROUP</text>
    </g>
    <path d="M1508.500 117l2 4 2.200-1-.8 5 3-2.500.6 1.500 2.500-.3-1 3 1 .8-4.500 3.500.4 1.800-4.800-.6.2 4h-1.200l.2-4-4.800.6.4-1.800-4.500-3.500 1-.8-1-3 2.500.3.6-1.500 3 2.500-.8-5 2.200 1z" fill="#ed1c24" />
  </svg>
);

const T = ({ w, icon, children }) => (
  <Tool $w={w}><svg width="24" height="24" viewBox="0 0 24 24">{toolIcons[icon]}</svg><div>{children}</div></Tool>
);

export default function App() {
  return (
    <>
      <Global />
      <Shell>
        <Nav>
          <Logo />
          <NavItems>
            {Object.entries(navIcons).map(([n, i]) => <NavItem key={n}>{i}{n}</NavItem>)}
          </NavItems>
          <Profile><svg width="24" height="24" viewBox="0 0 24 24" fill="#fff"><circle cx="12" cy="6.500" r="6" /><path d="M0 24c0-7 5-10 8-10 2 1.300 6 1.300 8 0 3 0 8 3 8 8.500 0 1-.5 1.500-1.500 1.500z" /></svg></Profile>
        </Nav>
        <Column>
          <TopBar>
            <DocTab>Toronto Experiment 3 (DGL)<Dots /></DocTab>
            <AddTab><svg width="14" height="14" stroke="#6f6f74" strokeWidth="2"><path d="M7 0v14M0 7h14" /></svg></AddTab>
            <AppTitle>Toronto Health and Safety Resources Application (Geocortex)</AppTitle>
            <TopRight>
              <SearchDot><Magnifier s={16} c="#fff" /></SearchDot>Locale
              <LocaleBox>en<Caret c="#77777b" /></LocaleBox>
            </TopRight>
          </TopBar>
          <Main>
            <Stage>
              <Backdrop><svg width="1500" height="895" fill="none" stroke="#f9e89c"><path d={topo.thin} /><path d={topo.thick} strokeWidth="1.800" /></svg></Backdrop>
              <Preview>
                <PreviewHead>
                  <UserBlock><Person c={MAPBLUE} /><UserText>Eric Mcneill<SignOut>Sign out</SignOut></UserText></UserBlock>
                  <Tools>
                    <T w={29} icon="draw">Draw</T><T w={86} icon="clear">Clear Drawings</T><T w={49} icon="measure">Measure</T>
                    <T w={43} icon="identify">Identify</T><T w={86} icon="zoom">Zoom to Initial<br />Map View</T>
                  </Tools>
                  <Brand><EdgeLogo /></Brand>
                </PreviewHead>
                <PreviewBody>
                  <Side>
                    <TabRow><SideTab $active>Home</SideTab><SideTab>Layers</SideTab><SideTab>Legend</SideTab></TabRow>
                    <Article>
                      <h1>City of Toronto</h1>
                      <h2>Health and Safety<br />Services</h2>
                      <hr />
                      <p>Welcome to <i>EDGE Community Safety<br />Group's</i> Toronto Health and Safety<br />Service web application.</p>
                      <p>To help you get started, consider<br />exploring these components to<br />become more familiar with the<br />information shown:</p>
                      <ul>
                        <li>Click on <b>Layers</b> to control which<br />types of services will be shown in<br />the map.</li>
                        <li>Click on <b>Legend</b> to see what<br />symbols are used to represent<br />the various services.</li>
                        <li><b>Click</b> on a feature of interest to<br />display information about it.</li>
                        <li>If you want to identify multiple<br />features, use the <b>Identify</b> tool to<br />draw a box around the features<br />of interest.</li>
                      </ul>
                    </Article>
                  </Side>
                  <MapArea>
                    <CityMap />
                    <WantTo $x={15} $y={15}>I want to...</WantTo>
                    <SearchBox $x={896} $y={15}>
                      <span>Search for ...</span>
                      <svg width="12" height="12"><circle cx="6" cy="6" r="5.800" fill="#bcbcc0" /><path d="M4 4l4 4M8 4l-4 4" stroke="#fff" strokeWidth="1.500" /></svg>
                      <Magnifier s={14} c={MAPBLUE} w={1.500} />
                    </SearchBox>
                    <RoundButton $x={1110} $y={58}><svg width="16" height="16" fill="none" stroke={MAPBLUE} strokeWidth="1.400"><circle cx="8" cy="8" r="5.300" /><path d="M8 0v4M8 12v4M0 8h4M12 8h4" /><circle cx="8" cy="8" r="1.200" fill={MAPBLUE} stroke="none" /></svg></RoundButton>
                    <RoundButton $x={1068} $y={698}><svg width="16" height="16"><rect width="16" height="16" rx="1" fill={MAPBLUE} /><path d="M0 6l6 4-4 6M6 10l10 6M16 8l-7 7M5 0v5" stroke="#fff" strokeWidth="1.300" fill="none" /><circle cx="9.500" cy="4.500" r="3" fill={MAPBLUE} stroke="#fff" strokeWidth="1.200" /><path d="M7.500 7l2 4 2-4z" fill="#fff" /></svg></RoundButton>
                    <RoundButton $x={1110} $y={698}><svg width="17" height="14" fill="none" stroke={MAPBLUE} strokeWidth="1.500"><path d="M8.500 3C6.500 1.500 4 1 1 1v10.500c3 0 5.500.3 7.500 1.500 2-1.200 4.500-1.500 7.500-1.500V1c-3 0-5.500.5-7.500 2zv10" /></svg></RoundButton>
                    <ScaleBox $x={15} $y={685}><b>Scale:</b><ScaleInput>246585.90<Caret c="#000" /></ScaleInput></ScaleBox>
                    <ScaleBar><ScaleSeg $w={83}>4 km</ScaleSeg><ScaleSeg $w={67} $last>2 mi</ScaleSeg></ScaleBar>
                  </MapArea>
                </PreviewBody>
              </Preview>
              <Corner><svg width="24" height="24" fill="none" stroke="#fff" strokeWidth="1.700"><rect x="1" y="1" width="22" height="22" /><path d="M6 18L18 6M9 5h10v10" strokeWidth="2" /></svg></Corner>
            </Stage>
            <Splitter><Grip><Handle c={BLUE} /></Grip></Splitter>
            <Panel>
              <PanelHead>
                <div>Toronto Experiment 3 (DGL)<br />Components</div>
                <svg width="22" height="23"><path d="M20 9V1.500H1V20h9" fill="none" stroke="#707075" strokeWidth="2" /><path d="M9 8l12.500 8-5 1 3 4.500-2.500 1.500-3-4.500-3 3.500z" fill="#707075" /></svg>
                <Dots />
              </PanelHead>
              <Switch><SwitchTab $active>Components</SwitchTab><SwitchTab>Services</SwitchTab></Switch>
              <AddWrap><AddButton><svg width="12" height="12" stroke="#fff" strokeWidth="1.500"><path d="M6 0v12M0 6h12" /></svg>Add Component</AddButton></AddWrap>
              <TreeArea>
                <Tree>
                  {rows.map(([icon, name, depth, open], i) => (
                    <TreeRow key={i} $depth={depth}>
                      <Handle />
                      {icon === "user" ? <Person c={ICON} /> : <svg width="24" height="24" viewBox="0 0 24 24">{rowIcons[icon]}</svg>}
                      <span>{name}</span>
                      {open && <Chevron down={open === 2} />}
                    </TreeRow>
                  ))}
                </Tree>
                <Scroll><svg width="8" height="4" fill="#a0a0a4"><path d="M0 4h8L4 0z" /></svg><Thumb /><Caret c="#505054" w={8} /></Scroll>
              </TreeArea>
            </Panel>
          </Main>
          <BottomLine />
        </Column>
        <Edge />
      </Shell>
    </>
  );
}
